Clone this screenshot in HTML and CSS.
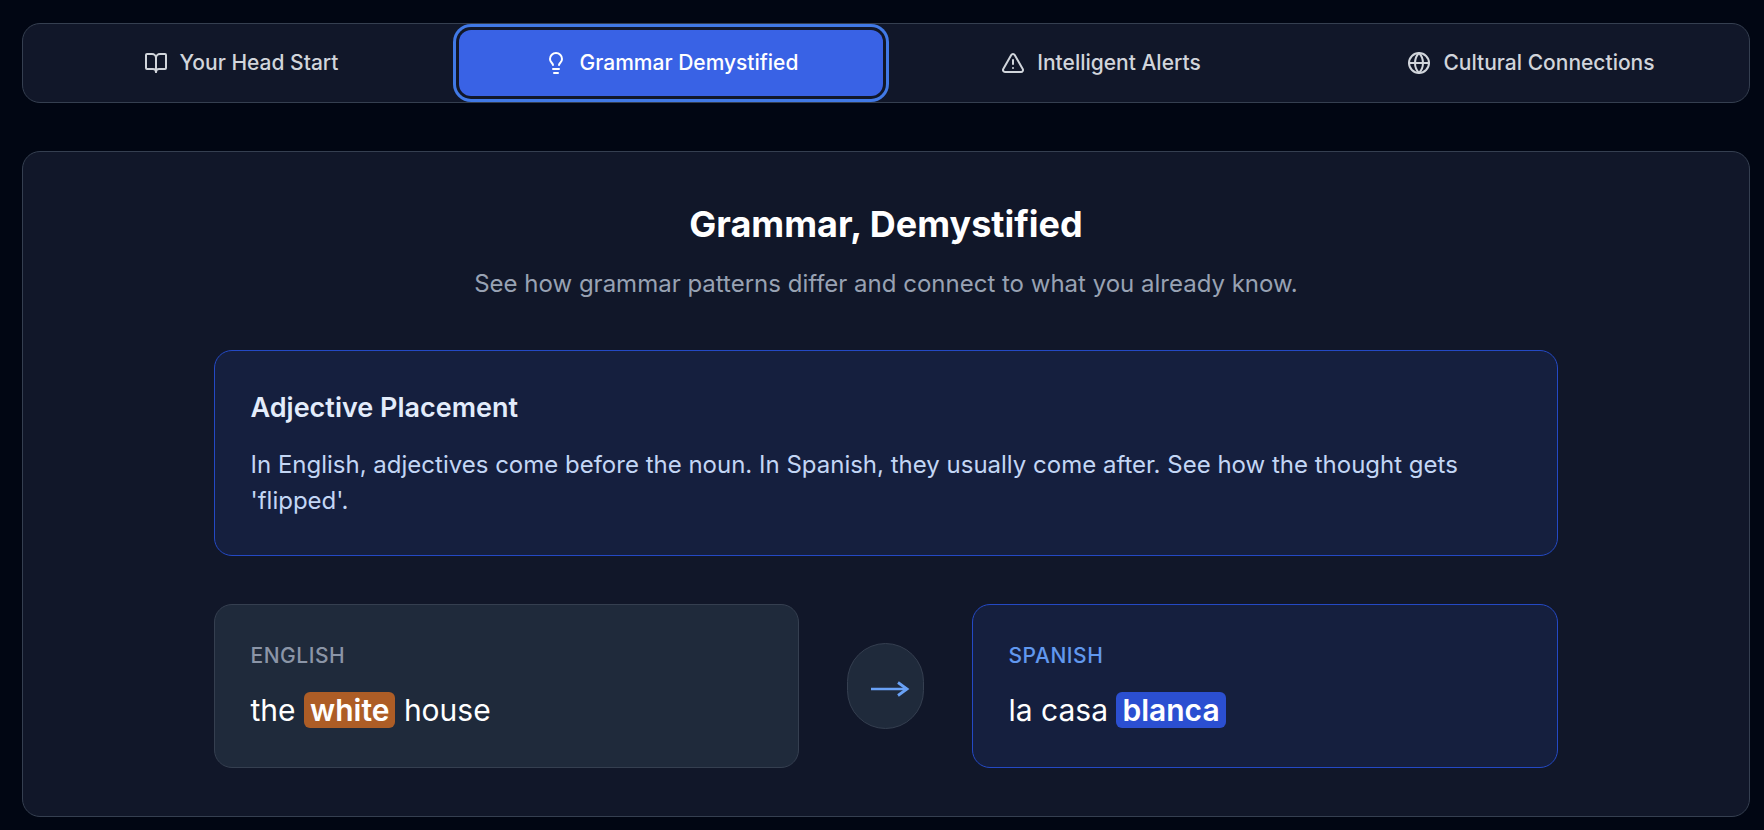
FILE: index.html
```html
<!DOCTYPE html>
<html lang="en">
<head>
<meta charset="utf-8">
<title>Grammar, Demystified</title>
<link rel="stylesheet" href="styles.css">
</head>
<body>
<div class="page">
  <nav class="tabs">
    <button class="tab">
      <svg class="icon" viewBox="0 0 24 24"><path d="M12 7v14"/><path d="M3 18a1 1 0 0 1-1-1V4a1 1 0 0 1 1-1h5a4 4 0 0 1 4 4 4 4 0 0 1 4-4h5a1 1 0 0 1 1 1v13a1 1 0 0 1-1 1h-6a3 3 0 0 0-3 3 3 3 0 0 0-3-3z"/></svg>
      <span>Your Head Start</span>
    </button>
    <button class="tab tab-active">
      <svg class="icon" viewBox="0 0 24 24"><path d="M15 14c.2-1 .7-1.7 1.5-2.5 1-.9 1.5-2.2 1.5-3.5A6 6 0 0 0 6 8c0 1 .2 2.2 1.5 3.5.7.7 1.3 1.5 1.5 2.5"/><path d="M9 18h6"/><path d="M10 22h4"/></svg>
      <span>Grammar Demystified</span>
    </button>
    <button class="tab">
      <svg class="icon" viewBox="0 0 24 24"><path d="m21.73 18-8-14a2 2 0 0 0-3.48 0l-8 14A2 2 0 0 0 4 21h16a2 2 0 0 0 1.73-3"/><path d="M12 9v4"/><path d="M12 17h.01"/></svg>
      <span>Intelligent Alerts</span>
    </button>
    <button class="tab">
      <svg class="icon" viewBox="0 0 24 24"><circle cx="12" cy="12" r="10"/><path d="M12 2a14.5 14.5 0 0 0 0 20 14.5 14.5 0 0 0 0-20"/><path d="M2 12h20"/></svg>
      <span>Cultural Connections</span>
    </button>
  </nav>
  <main class="panel">
    <h1 class="panel-title">Grammar, Demystified</h1>
    <p class="panel-sub">See how grammar patterns differ and connect to what you already know.</p>
    <div class="content">
      <section class="rule">
        <h2 class="rule-title">Adjective Placement</h2>
        <p class="rule-text">In English, adjectives come before the noun. In Spanish, they usually come after. See how the thought gets 'flipped'.</p>
      </section>
      <div class="compare">
        <div class="lang lang-en">
          <div class="lang-label">ENGLISH</div>
          <div class="phrase">the <span class="mark mark-en">white</span> house</div>
        </div>
        <div class="arrow">
          <svg class="arrow-icon" viewBox="0 0 39 48"><path class="arrow-shaft" d="M5 27H41"/><path class="arrow-head" d="M32 20.5 41 27 32 33.5"/></svg>
        </div>
        <div class="lang lang-es">
          <div class="lang-label lang-label-es">SPANISH</div>
          <div class="phrase">la casa <span class="mark mark-es">blanca</span></div>
        </div>
      </div>
    </div>
  </main>
</div>
</body>
</html>
```
FILE: styles.css
```css
* { box-sizing: border-box; }
html, body { margin: 0; height: 100%; }
body {
  background: #010613;
  font-family: Inter, "Liberation Sans", sans-serif;
  overflow: hidden;
}
.page {
  padding: 22.5px 14px 0 22px;
  display: flex;
  flex-direction: column;
  gap: 48px;
}
.tabs {
  display: grid;
  grid-template-columns: repeat(4, 1fr);
  gap: 6px;
  padding: 6px;
  background: #111729;
  border: 1px solid #353f50;
  border-radius: 18px;
}
.tab {
  display: flex;
  align-items: center;
  justify-content: center;
  gap: 12px;
  height: 66px;
  padding: 0;
  border: 0;
  border-radius: 12px;
  background: transparent;
  color: #d1d5db;
  font: 545 21px/30px Inter, "Liberation Sans", sans-serif;
}
.tab-active {
  background: #3962e5;
  color: #fff;
  box-shadow: 0 0 0 3px #111729, 0 0 0 6px #4179e6;
  position: relative;
}
.icon {
  width: 24px;
  height: 24px;
  fill: none;
  stroke: currentColor;
  stroke-width: 2;
  stroke-linecap: round;
  stroke-linejoin: round;
}
.panel {
  padding: 48px 0;
  background: #111729;
  border: 1px solid #353f50;
  border-radius: 18px;
  text-align: center;
}
.panel-title {
  margin: 0 0 18px;
  color: #fff;
  font-size: 36px;
  line-height: 48px;
  font-weight: 700;
}
.panel-sub {
  margin: 0 0 48px;
  color: #98a2b3;
  font-size: 24px;
  line-height: 36px;
  font-weight: 420;
}
.content {
  width: 1344px;
  margin: 0 auto;
  display: flex;
  flex-direction: column;
  gap: 48px;
  text-align: left;
}
.rule {
  padding: 36px 36px 36px 35.5px;
  background: #151f3e;
  border: 1px solid #2449c4;
  border-radius: 18px;
}
.rule-title {
  margin: 0 0 18px;
  color: #e3ecfb;
  font-size: 27px;
  line-height: 42px;
  font-weight: 600;
}
.rule-text {
  margin: 0;
  color: #c3d6f5;
  font-size: 24px;
  line-height: 36px;
  font-weight: 420;
}
.compare {
  display: grid;
  grid-template-columns: 585px auto 1fr;
  align-items: center;
  gap: 48px;
}
.lang {
  padding: 36px 36px 36px 35.5px;
  border: 1px solid #353f50;
  border-radius: 18px;
}
.lang-en { background: #1f2a3b; }
.lang-es { background: #151f3e; border-color: #2449c4; }
.lang-label {
  margin-bottom: 18px;
  color: #8b95a7;
  font-size: 21px;
  line-height: 30px;
  font-weight: 500;
  letter-spacing: 0.525px;
}
.lang-label-es { color: #6198ee; }
.phrase {
  color: #fff;
  font-size: 30px;
  line-height: 42px;
  font-weight: 420;
}
.mark {
  padding: 0 6px;
  border-radius: 6px;
  font-weight: 600;
}
.mark-en { background: #ad5d26; }
.mark-es { background: #2b4fd1; }
.arrow {
  padding: 18px;
  background: #1f2a3b;
  border: 1px solid #353f50;
  border-radius: 999px;
  display: flex;
}
.arrow-icon {
  width: 39px;
  height: 48px;
  overflow: visible;
  fill: none;
  stroke: #69a1f5;
}
.arrow-shaft { stroke-width: 2.4; }
.arrow-head { stroke-width: 2.8; stroke-linejoin: miter; }
```
